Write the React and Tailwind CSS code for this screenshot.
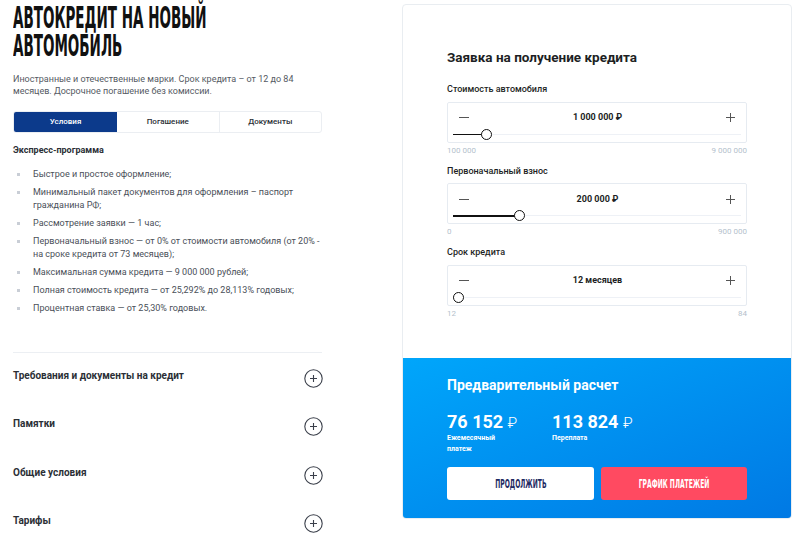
import React from "react";

const condensed = { fontFamily: '"DejaVu Sans Condensed", "DejaVu Sans", sans-serif' };

const conditions = [
  "Быстрое и простое оформление;",
  "Минимальный пакет документов для оформления – паспорт гражданина РФ;",
  "Рассмотрение заявки — 1 час;",
  "Первоначальный взнос — от 0% от стоимости автомобиля (от 20% - на сроке кредита от 73 месяцев);",
  "Максимальная сумма кредита — 9 000 000 рублей;",
  "Полная стоимость кредита — от 25,292% до 28,113% годовых;",
  "Процентная ставка — от 25,30% годовых.",
];

const sections = ["Требования и документы на кредит", "Памятки", "Общие условия", "Тарифы"];

const PlusCircle = () => (
  <svg width="19" height="19" viewBox="0 0 19 19" fill="none" stroke="#3a3f4a" strokeWidth="1.1">
    <circle cx="9.5" cy="9.5" r="8.7" />
    <path d="M9.5 6v7M6 9.5h7" />
  </svg>
);

const SliderField = ({ label, value, min, max, percent }) => (
  <div className="mb-[8px]">
    <div className="text-[9px] font-medium text-[#1d1f24] mb-[5px]">{label}</div>
    <div className="border border-[#e6ebf1] rounded-[2px] h-[41px] px-[5px] pt-[9px]">
      <div className="flex items-center justify-between px-[6px] h-[12px]">
        <span className="w-[10px] h-px bg-[#555]" />
        <span className="text-[9px] font-bold text-[#1d1f24]">{value}</span>
        <svg width="9" height="9" viewBox="0 0 9 9" stroke="#555" strokeWidth="1">
          <path d="M4.5 0v9M0 4.5h9" />
        </svg>
      </div>
      <div className="relative mt-[6px] h-[10px]">
        <div className="absolute left-0 right-0 top-[4px] h-px bg-[#eef1f6]" />
        <div className="absolute left-0 top-[4px] h-[1.5px] bg-[#111]" style={{ width: `${percent}%` }} />
        <div
          className="absolute top-[-1px] w-[11px] h-[11px] rounded-full bg-white border-[1.5px] border-[#111]"
          style={{ left: `calc(${percent}% - 5px)` }}
        />
      </div>
    </div>
    <div className="flex justify-between text-[8px] text-[#b4bfcc] mt-[2px]">
      <span>{min}</span>
      <span>{max}</span>
    </div>
  </div>
);

const CondensedLabel = ({ children }) => (
  <span className="inline-block origin-center scale-x-[0.56] whitespace-nowrap">{children}</span>
);

export default function App() {
  return (
    <div className="w-[800px] h-[534px] bg-white overflow-hidden flex" style={{ fontFamily: "Roboto, sans-serif" }}>
      <div className="w-[309px] ml-[13px] pt-[3px]">
        <h1
          className="text-[30px] leading-[28px] font-bold text-[#111] whitespace-nowrap origin-left scale-x-[0.5] h-[58px] pt-[1px]"
          style={condensed}
        >
          АВТОКРЕДИТ НА НОВЫЙ
          <br />
          АВТОМОБИЛЬ
        </h1>
        <p className="mt-[12px] text-[9px] leading-[12px] text-[#555a63]">
          Иностранные и отечественные марки. Срок кредита – от 12 до 84 месяцев. Досрочное погашение без комиссии.
        </p>
        <div className="mt-[14px] flex h-[22px] border border-[#ebeef2] rounded-[3px] text-[8px] font-medium text-[#2b2f36] overflow-hidden">
          <div className="w-[103px] bg-[#0c3a8b] text-white flex items-center justify-center">Условия</div>
          <div className="flex-1 flex items-center justify-center border-r border-[#ebeef2]">Погашение</div>
          <div className="flex-1 flex items-center justify-center">Документы</div>
        </div>
        <div className="mt-[11px] text-[9px] font-bold text-[#2b2f36]">Экспресс-программа</div>
        <ul className="mt-[10px] flex flex-col gap-[5px] -mr-[6px]">
          {conditions.map((c) => (
            <li key={c} className="flex text-[9px] leading-[13px] text-[#4a4f58]">
              <span className="w-[3px] h-[3px] bg-[#c9ced6] mt-[5px] ml-[4px] mr-[13px] shrink-0" />
              <span>{c}</span>
            </li>
          ))}
        </ul>
        <div className="mt-[37px] border-t border-[#eceff3]">
          {sections.map((s) => (
            <div key={s} className="h-[48.5px] flex justify-between pt-[15px]">
              <span className="text-[10px] font-bold text-[#2b2f36]">{s}</span>
              <span className="mt-[1px] -mr-[1px]">
                <PlusCircle />
              </span>
            </div>
          ))}
        </div>
      </div>

      <div className="ml-[80px] mt-[4px] w-[390px] h-[515px] border border-[#e9edf1] rounded-[4px] flex flex-col overflow-hidden">
        <div className="flex-1 pt-[42px] px-[44px]">
          <h2 className="text-[13.5px] font-bold text-[#1d1f24] mb-[16px]">Заявка на получение кредита</h2>
          <SliderField label="Стоимость автомобиля" value="1 000 000 ₽" min="100 000" max="9 000 000" percent={11.5} />
          <SliderField label="Первоначальный взнос" value="200 000 ₽" min="0" max="900 000" percent={23} />
          <SliderField label="Срок кредита" value="12 месяцев" min="12" max="84" percent={1.8} />
        </div>
        <div className="h-[160px] bg-gradient-to-br from-[#00a6fb] to-[#0079e4] px-[44px] pt-[17px] text-white">
          <div className="text-[14px] font-bold">Предварительный расчет</div>
          <div className="flex mt-[16px] h-[50px]">
            <div className="w-[105px]">
              <div className="text-[18px] font-bold leading-[20px]">
                76 152 <span className="font-light text-[15px]">₽</span>
              </div>
              <div className="text-[7px] font-bold leading-[11px] w-[60px]">Ежемесячный платеж</div>
            </div>
            <div>
              <div className="text-[18px] font-bold leading-[20px]">
                113 824 <span className="font-light text-[15px]">₽</span>
              </div>
              <div className="text-[7px] font-bold leading-[11px]">Переплата</div>
            </div>
          </div>
          <div className="flex gap-[7px] mt-[5px]">
            <button
              className="w-[147px] h-[33px] bg-white rounded-[3px] text-[#1f2b63] text-[12px] font-bold"
              style={condensed}
            >
              <CondensedLabel>ПРОДОЛЖИТЬ</CondensedLabel>
            </button>
            <button
              className="w-[146px] h-[33px] bg-[#ff4a61] rounded-[3px] text-white text-[12px] font-bold"
              style={condensed}
            >
              <CondensedLabel>ГРАФИК ПЛАТЕЖЕЙ</CondensedLabel>
            </button>
          </div>
        </div>
      </div>
    </div>
  );
}
